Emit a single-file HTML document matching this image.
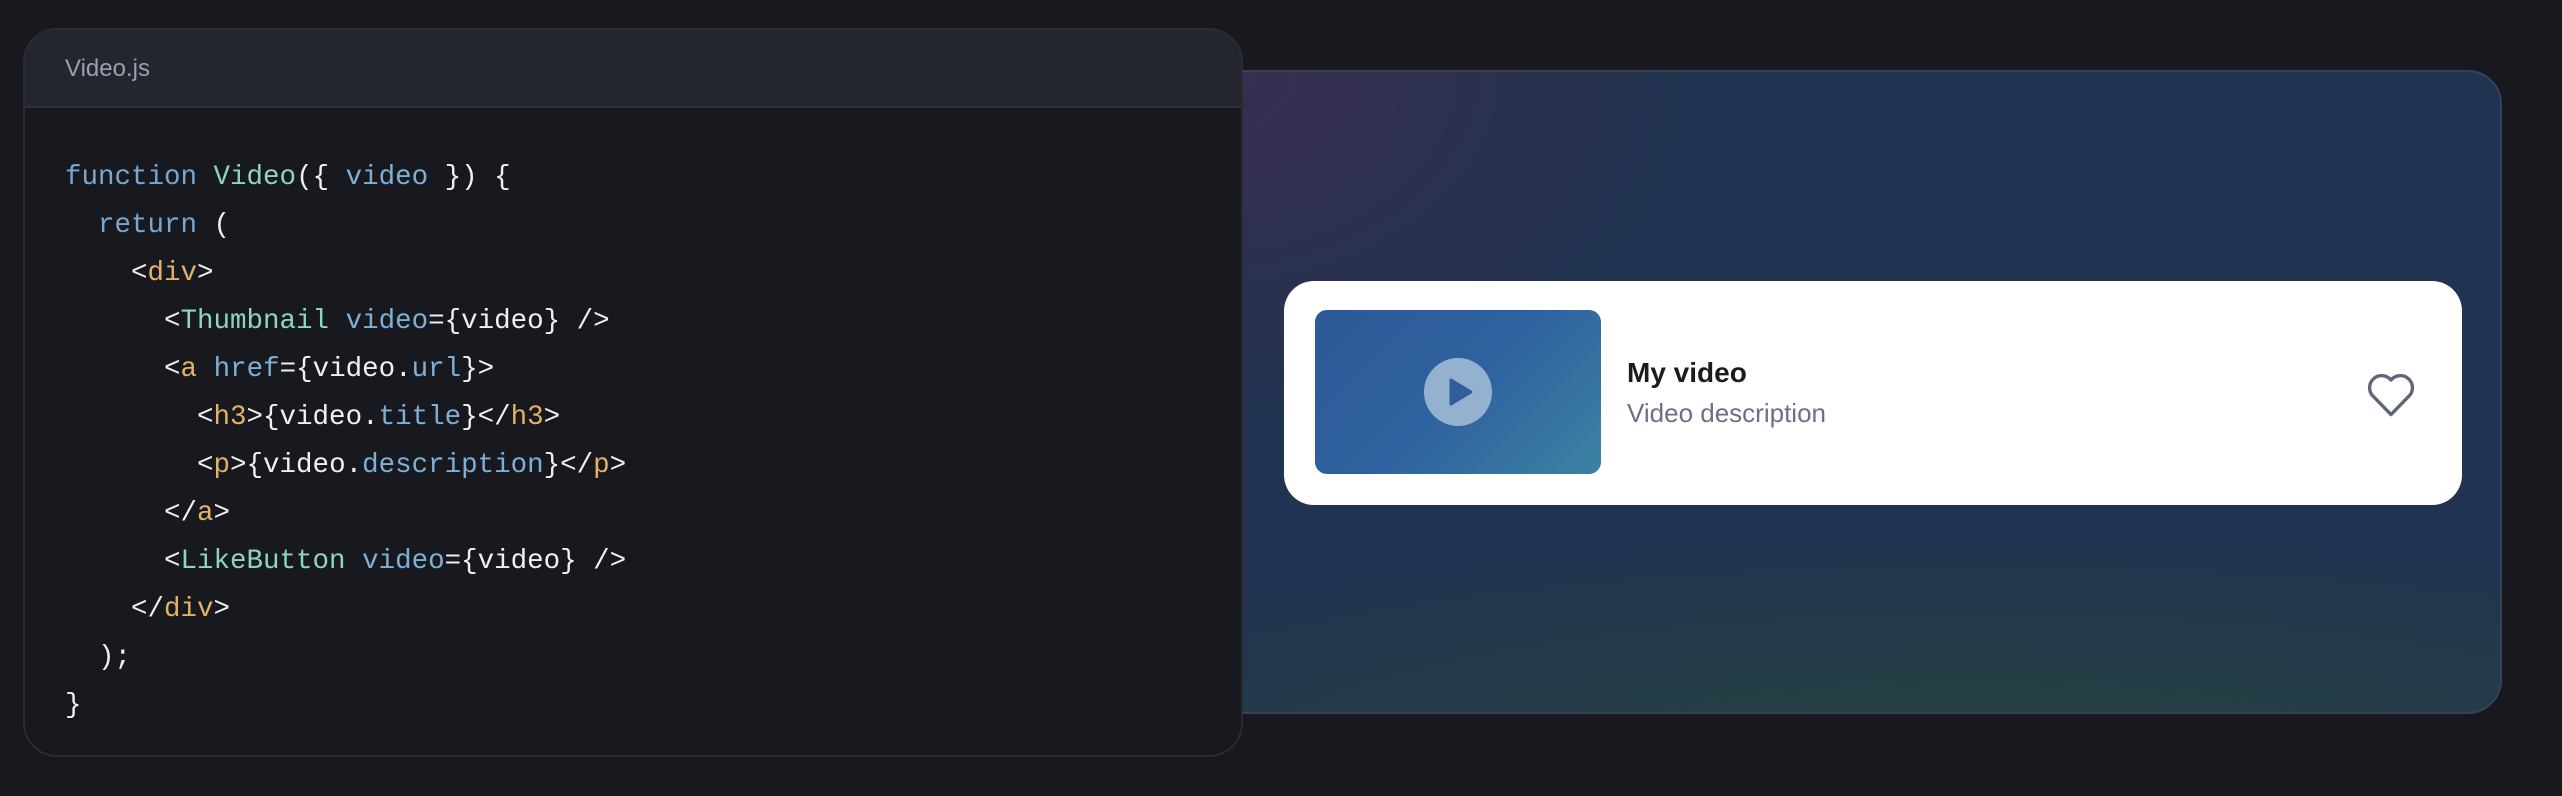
<!DOCTYPE html>
<html><head><meta charset="utf-8"><style>
html,body{margin:0;padding:0;width:2562px;height:796px;background:#18191e;overflow:hidden;font-family:"Liberation Sans",sans-serif}
.prev{position:absolute;left:1200px;top:70px;width:1302px;height:644px;border:2px solid #35425a;border-radius:34px;box-sizing:border-box;
background:radial-gradient(ellipse 700px 500px at 0% 0%,rgba(60,45,80,.9),rgba(60,45,80,0) 70%),radial-gradient(ellipse 1400px 300px at 60% 110%,rgba(40,75,60,.8),rgba(40,75,60,0) 80%),#213350;}
.code{position:absolute;left:23px;top:28px;width:1220px;height:729px;background:#18191f;border:2px solid #2a2c33;border-radius:34px;box-sizing:border-box;overflow:hidden}
.hdr{height:78px;background:#23262f;border-bottom:2px solid #30323a;box-sizing:border-box;padding-left:40px;line-height:78px;color:#9aa0ab;font-size:24px}
pre{margin:0;position:absolute;left:40px;top:124px;font-family:"Liberation Mono",monospace;font-size:27.5px;line-height:48px;color:#f0f0f0}
.k{color:#79a6cf}.c{color:#8fd3c2}.t{color:#e2b266}.a{color:#7eafd4}
.card{position:absolute;left:1284px;top:281px;width:1178px;height:224px;background:#fff;border-radius:30px}
.th{position:absolute;left:31px;top:29px;width:286px;height:164px;border-radius:12px;background:linear-gradient(135deg,#2c5996 0%,#2f62a0 50%,#3c82a2 100%)}
.pl{position:absolute;left:109px;top:48px;width:68px;height:68px;border-radius:50%;background:#94b2cf}
.h{position:absolute;left:343px;top:76px;font-size:28px;font-weight:bold;color:#1b1c20}
.d{position:absolute;left:343px;top:117px;font-size:26px;color:#6b7184}
</style></head><body>
<div class="prev"></div>
<div class="code"><div class="hdr">Video.js</div>
<pre><span class="k">function</span> <span class="c">Video</span>({ <span class="a">video</span> }) {
  <span class="k">return</span> (
    &lt;<span class="t">div</span>&gt;
      &lt;<span class="c">Thumbnail</span> <span class="a">video</span>={video} /&gt;
      &lt;<span class="t">a</span> <span class="a">href</span>={video.<span class="a">url</span>}&gt;
        &lt;<span class="t">h3</span>&gt;{video.<span class="a">title</span>}&lt;/<span class="t">h3</span>&gt;
        &lt;<span class="t">p</span>&gt;{video.<span class="a">description</span>}&lt;/<span class="t">p</span>&gt;
      &lt;/<span class="t">a</span>&gt;
      &lt;<span class="c">LikeButton</span> <span class="a">video</span>={video} /&gt;
    &lt;/<span class="t">div</span>&gt;
  );
}</pre></div>
<div class="card">
<div class="th"><div class="pl"><svg width="68" height="68" viewBox="0 0 68 68"><path d="M27 22 L47 34 L27 46 Z" fill="#2f5e98" stroke="#2f5e98" stroke-width="3" stroke-linejoin="round"/></svg></div></div>
<div class="h">My video</div>
<div class="d">Video description</div>
<svg style="position:absolute;left:1078px;top:84px" width="58" height="58" viewBox="0 0 24 24"><path d="M12 20.5 L4.3 12.6 A4.6 4.6 0 0 1 12 6.2 A4.6 4.6 0 0 1 19.7 12.6 Z" fill="none" stroke="#5f667a" stroke-width="1.4" stroke-linejoin="round"/></svg>
</div>
</body></html>
